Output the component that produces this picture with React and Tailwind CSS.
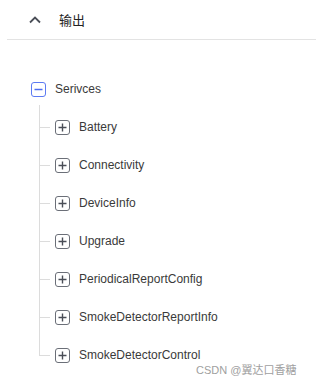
const items = [
  "Battery",
  "Connectivity",
  "DeviceInfo",
  "Upgrade",
  "PeriodicalReportConfig",
  "SmokeDetectorReportInfo",
  "SmokeDetectorControl",
];

const PlusBox = () => (
  <span className="w-[15px] h-[15px] shrink-0 rounded-[3px] border border-[#6b6f78] flex items-center justify-center">
    <svg width="9" height="9" viewBox="0 0 9 9">
      <path d="M0.5 4.5h8M4.5 0.5v8" stroke="#4a4e57" strokeWidth="1.4" />
    </svg>
  </span>
);

const MinusBox = () => (
  <span className="w-[15px] h-[15px] shrink-0 rounded-[3px] border-[1.5px] border-[#5d7bf2] flex items-center justify-center">
    <svg width="9" height="9" viewBox="0 0 9 9">
      <path d="M0.5 4.5h8" stroke="#4d6cf0" strokeWidth="1.5" />
    </svg>
  </span>
);

export default function App() {
  return (
    <div
      className="relative w-[318px] h-[385px] bg-white overflow-hidden text-[#3a3a3a]"
      style={{ fontFamily: '"Liberation Sans", Arial, "Noto Sans CJK SC", sans-serif' }}
    >
      {/* Header */}
      <div className="h-[39px] flex items-center pl-[29px]">
        <svg width="12" height="8" viewBox="0 0 12 8" className="shrink-0">
          <path d="M1 6.5L6 1.5L11 6.5" fill="none" stroke="#4a4e57" strokeWidth="1.8" />
        </svg>
        <span className="ml-[18px] text-[13px] text-[#222]" style={{ fontFamily: '"Noto Sans CJK SC", sans-serif' }}>
          输出
        </span>
      </div>
      <div className="ml-[7px] mr-[2px] h-px bg-[#e3e3e3]" />

      {/* Tree */}
      <div className="mt-[30px]">
        <div className="h-[38px] flex items-center pl-[31px]">
          <MinusBox />
          <span className="ml-[9px] text-[12px]">Serivces</span>
        </div>
        <div className="relative">
          <div className="absolute left-[39px] top-[-3px] h-[3px] w-px bg-[#dcdcdc]" />
          {items.map((name, i) => {
            const last = i === items.length - 1;
            return (
              <div key={name} className="h-[38px] flex items-center pl-[39px]">
                <div className="relative w-[16px] h-full shrink-0">
                  <div
                    className={`absolute left-0 top-0 w-px bg-[#dcdcdc] ${last ? "h-1/2" : "h-full"}`}
                  />
                  <div className="absolute left-0 top-1/2 w-[11px] h-px bg-[#dcdcdc]" />
                </div>
                <PlusBox />
                <span className="ml-[9px] text-[12px]">{name}</span>
              </div>
            );
          })}
        </div>
      </div>

      {/* Watermark */}
      <div
        className="absolute left-[196px] top-[362px] text-[11px] text-[#a0a0a0] whitespace-nowrap"
        style={{ fontFamily: '"Liberation Sans", "Noto Sans CJK SC", sans-serif' }}
      >
        CSDN @翼达口香糖
      </div>
    </div>
  );
}
